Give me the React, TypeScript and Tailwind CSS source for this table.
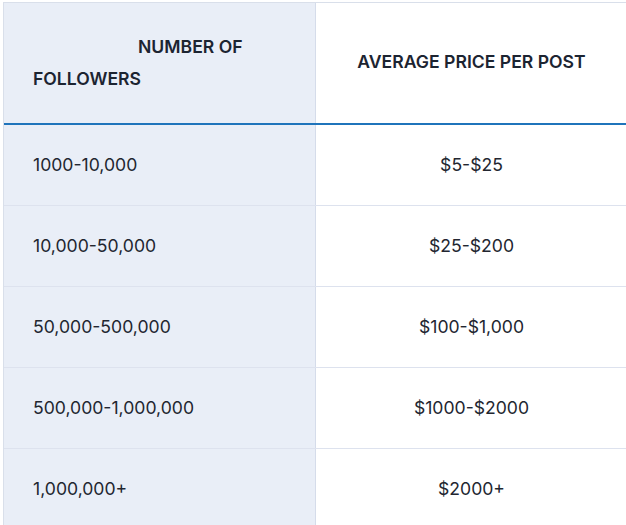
import React from 'react';

const rows = [
  { followers: '1000-10,000', price: '$5-$25' },
  { followers: '10,000-50,000', price: '$25-$200' },
  { followers: '50,000-500,000', price: '$100-$1,000' },
  { followers: '500,000-1,000,000', price: '$1000-$2000' },
  { followers: '1,000,000+', price: '$2000+' },
];

const App: React.FC = () => {
  return (
    <div className="min-h-screen bg-white pt-[2px] pl-[3px] overflow-hidden font-['Inter',sans-serif]">
      <div className="w-[624px] border-t border-l border-[#d9dfea]">
        {/* Header */}
        <div className="grid grid-cols-[312px_1fr] border-b-2 border-[#1f74bb]">
          <div className="h-[120px] bg-[#e9eef7] border-r border-[#d5dcea] px-[29px] flex items-center">
            <p className="text-[17.6px] font-semibold leading-[32px] text-[#1c2431] indent-[105px] -mt-[1px]">
              NUMBER OF FOLLOWERS
            </p>
          </div>
          <div className="h-[120px] flex items-center justify-center">
            <p className="text-[17.6px] font-semibold text-[#1c2431] -mt-[2px]">AVERAGE PRICE PER POST</p>
          </div>
        </div>

        {/* Rows */}
        {rows.map((r) => (
          <div key={r.followers} className="grid grid-cols-[312px_1fr] border-b border-[#dde2ee]">
            <div className="h-[80px] bg-[#e9eef7] border-r border-[#d5dcea] px-[29px] flex items-center text-[17.6px] text-[#222630]">
              {r.followers}
            </div>
            <div className="h-[80px] flex items-center justify-center text-[17.6px] text-[#222630]">
              {r.price}
            </div>
          </div>
        ))}
      </div>
    </div>
  );
};

export default App;
